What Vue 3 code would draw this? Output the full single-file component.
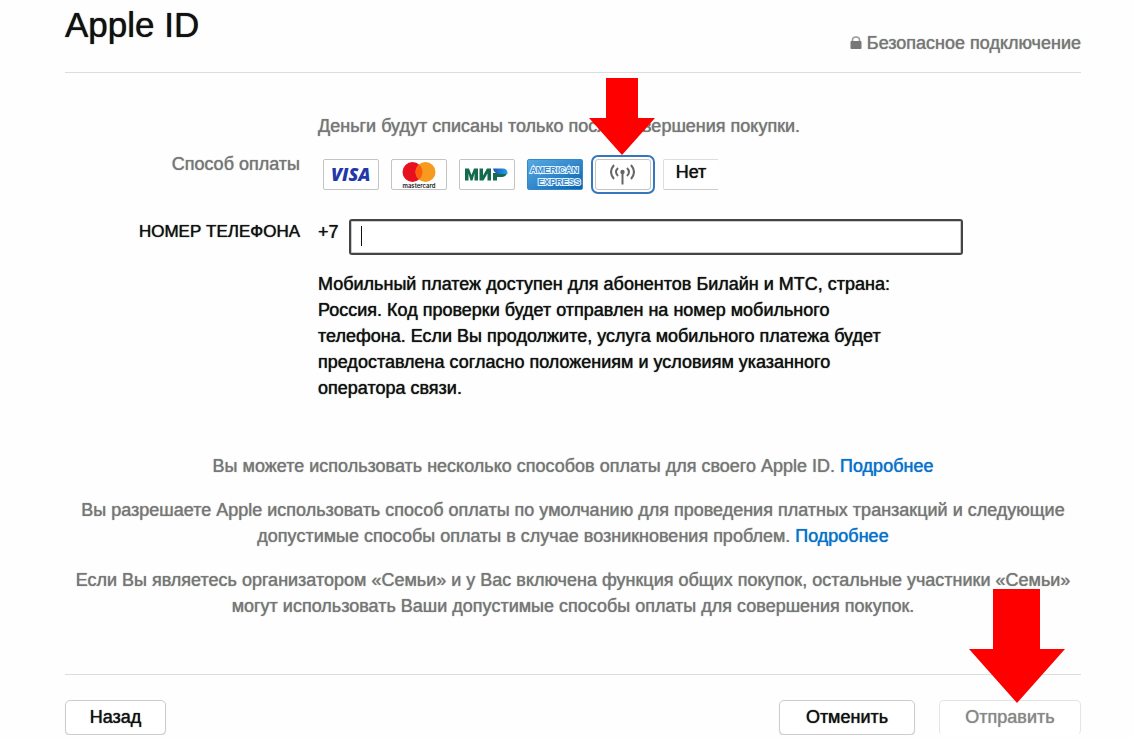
<script setup>
import { ref, onMounted } from 'vue'

const method = ref('mobile')
const phone = ref('')
const phoneInput = ref(null)

onMounted(() => phoneInput.value.focus())
</script>

<template>
  <main class="page">
    <header class="header">
      <h1 class="title">Apple ID</h1>
      <p class="secure">
        <svg class="lock" viewBox="0 0 12 14" aria-hidden="true">
          <path d="M2.500 7V4a3.500 3 0 0 1 7 0v3" fill="none" stroke="#999" stroke-width="1.600" />
          <rect x="0.500" y="5" width="11" height="8" rx="1" fill="#777" />
        </svg>
        Безопасное подключение
      </p>
    </header>

    <form class="form" @submit.prevent>
      <p class="note second">Деньги будут списаны только после совершения покупки.</p>

      <span id="method-label" class="label muted">Способ оплаты</span>
      <div class="methods" role="radiogroup" aria-labelledby="method-label">
        <label class="card">
          <input v-model="method" type="radio" name="method" value="visa" aria-label="Visa" />
          <svg class="art" viewBox="0 0 54 29" aria-hidden="true">
            <text x="7" y="21" font-family="Open Sans, sans-serif" font-size="18" font-weight="800" font-style="italic" fill="#2338a8">VISA</text>
          </svg>
        </label>
        <label class="card">
          <input v-model="method" type="radio" name="method" value="mastercard" aria-label="Mastercard" />
          <svg class="art" viewBox="0 0 54 29" aria-hidden="true">
            <circle cx="20.500" cy="12" r="10" fill="#e8101f" />
            <circle cx="33.500" cy="12" r="10" fill="#f79a20" />
            <path d="M27 4.400a10 10 0 0 1 0 15.200a10 10 0 0 1 0-15.200z" fill="#ff5f0b" />
            <text x="27" y="28" text-anchor="middle" font-family="Inter, sans-serif" font-size="6" font-weight="600" fill="#222">mastercard</text>
          </svg>
        </label>
        <label class="card">
          <input v-model="method" type="radio" name="method" value="mir" aria-label="Мир" />
          <svg class="art" viewBox="0 0 54 29" aria-hidden="true">
            <defs>
              <linearGradient id="mir-blue"><stop offset="0" stop-color="#1c52b8" /><stop offset="1" stop-color="#20a0e8" /></linearGradient>
            </defs>
            <path d="M5 20.500V8.500h4l2.500 6.500 2.500-6.500h4v12h-3.500v-7l-2 7h-2l-2-7v7z" fill="#126b4d" />
            <path d="M19.500 20.500v-12H23v7l4-7h4v12h-3.500v-7l-4 7z" fill="#126b4d" />
            <path d="M33 13h14q-1 4-5.500 4H37v3.500h-4z" fill="#126b4d" />
            <path d="M33 8.500h9.500q5.500 0 5 5.500h-9q-4.500-1-5.500-5.500z" fill="url(#mir-blue)" />
          </svg>
        </label>
        <label class="card amex">
          <input v-model="method" type="radio" name="method" value="amex" aria-label="American Express" />
          <svg class="art" viewBox="0 0 54 29" aria-hidden="true">
            <defs>
              <linearGradient id="amex-blue" x2="1" y2="1"><stop offset="0" stop-color="#56a9df" /><stop offset="0.500" stop-color="#3489cc" /><stop offset="1" stop-color="#0b62ab" /></linearGradient>
            </defs>
            <rect width="54" height="29" fill="url(#amex-blue)" />
            <g font-family="Liberation Sans, sans-serif" font-size="9" font-weight="700" fill="#3489cc" stroke="#e4f3ff" stroke-width="2" paint-order="stroke">
              <text x="2" y="13">AMERICAN</text>
              <text x="10" y="25">EXPRESS</text>
            </g>
          </svg>
        </label>
        <label class="card">
          <input v-model="method" type="radio" name="method" value="mobile" aria-label="Мобильный платеж" />
          <svg class="art" viewBox="0 0 54 29" aria-hidden="true" fill="none" stroke="#666" stroke-width="2">
            <path d="M18 5q-6 7 0 14M35 5q6 7 0 14M22 8q-4 4 0 8M31 8q4 4 0 8M26.500 12v12.500" />
            <circle cx="26.500" cy="12" r="2.200" fill="#666" stroke="none" />
          </svg>
          <svg class="arrow arrow-method" viewBox="0 0 66 77" aria-hidden="true">
            <path d="M17 0h32v40h17L33 77 0 40h17z" fill="#f00" />
          </svg>
        </label>
        <label class="card none">
          <input v-model="method" type="radio" name="method" value="none" />
          <span>Нет</span>
        </label>
      </div>

      <label class="label phone-label" for="phone">НОМЕР ТЕЛЕФОНА</label>
      <div class="phone-row">
        <span>+7</span>
        <input id="phone" ref="phoneInput" v-model="phone" class="phone" :class="{ empty: !phone }" type="tel" />
      </div>

      <p class="help second">
        Мобильный платеж доступен для абонентов Билайн и МТС, страна:<br />
        Россия. Код проверки будет отправлен на номер мобильного<br />
        телефона. Если Вы продолжите, услуга мобильного платежа будет<br />
        предоставлена согласно положениям и условиям указанного<br />
        оператора связи.
      </p>
    </form>

    <section class="terms">
      <p>Вы можете использовать несколько способов оплаты для своего Apple ID. <a href="#">Подробнее</a></p>
      <p>
        Вы разрешаете Apple использовать способ оплаты по умолчанию для проведения платных транзакций и следующие<br />
        допустимые способы оплаты в случае возникновения проблем. <a href="#">Подробнее</a>
      </p>
      <p>
        Если Вы являетесь организатором «Семьи» и у Вас включена функция общих покупок, остальные участники «Семьи»<br />
        могут использовать Ваши допустимые способы оплаты для совершения покупок.
      </p>
    </section>

    <footer class="footer">
      <button class="btn back" type="button">Назад</button>
      <button class="btn cancel" type="button">Отменить</button>
      <div class="submit-wrap">
        <button class="btn submit" type="button" disabled>Отправить</button>
        <svg class="arrow arrow-submit" viewBox="0 0 96 114" aria-hidden="true">
          <path d="M24 0h47v60h25L48 114 0 60h24z" fill="#f00" />
        </svg>
      </div>
    </footer>
  </main>
</template>

<style>
body {
  background: #fefefe;
}
</style>

<style scoped>
.page {
  box-sizing: border-box;
  padding: 0 53px 0 65px;
  font-family: "Liberation Sans", Arial, sans-serif;
  font-size: 18px;
  line-height: 26px;
  color: #111;
  text-shadow: 0 0 1px currentColor;
}

h1,
p {
  margin: 0;
}

.header {
  display: flex;
  justify-content: space-between;
  height: 72px;
  border-bottom: 1px solid #ddd;
}

.title {
  font-size: 35px;
  line-height: 50px;
  font-weight: 400;
}

.secure {
  display: flex;
  align-items: center;
  gap: 5px;
  padding-top: 14px;
  color: #777;
}

.lock {
  width: 12px;
  height: 14px;
}

.form {
  display: grid;
  grid-template-columns: 235px 1fr;
  column-gap: 18px;
  padding-top: 40px;
}

.second {
  grid-column: 2;
}

.note,
.muted {
  color: #777;
}

.label {
  text-align: right;
}

.muted {
  padding-top: 12px;
}

.methods {
  display: flex;
  gap: 12px;
  padding: 20px 0 0 5px;
}

.card {
  position: relative;
  box-sizing: border-box;
  width: 56px;
  height: 31px;
  border: 1px solid #c4c4c4;
  border-radius: 2px;
  background: #fff;
}

.card input {
  position: absolute;
  inset: 0;
  margin: 0;
  opacity: 0;
}

.card:has(input:checked) {
  border-radius: 3px;
  outline: 2px solid #3477bd;
  outline-offset: 2px;
}

.art {
  display: block;
  width: 54px;
  height: 29px;
  text-shadow: none;
}

.amex {
  border-color: #3489cc;
}

.none {
  border-color: #ddd transparent #ccc #ddd;
  line-height: 24px;
  text-align: center;
}

.arrow {
  position: absolute;
  pointer-events: none;
}

.arrow-method {
  left: -7px;
  bottom: 34px;
  width: 66px;
  height: 77px;
}

.phone-label {
  padding-top: 29px;
  font-size: 17px;
}

.phone-row {
  display: flex;
  gap: 10px;
  padding-top: 29px;
}

.phone {
  box-sizing: border-box;
  flex: 0 1 614px;
  min-width: 0;
  height: 36px;
  padding: 0 10px;
  border: 2px solid #444;
  border-radius: 3px;
  outline: none;
  background: #fff;
  box-shadow: inset 0 0 0 1px #ccc;
  font: inherit;
  color: #111;
}

.phone.empty {
  background: linear-gradient(#111, #111) 10px 5px / 1px 20px no-repeat #fff;
  caret-color: transparent;
}

.help {
  padding-top: 16px;
}

.terms {
  display: grid;
  gap: 18px;
  padding-top: 52px;
  text-align: center;
  white-space: nowrap;
  color: #777;
}

.terms a {
  color: #0b70c8;
  text-decoration: none;
}

.footer {
  display: flex;
  gap: 24px;
  margin-top: 55px;
  padding-top: 25px;
  border-top: 1px solid #ddd;
}

.btn {
  box-sizing: border-box;
  height: 35px;
  padding: 0 0 2px;
  border: 1px solid #ccc;
  border-radius: 5px;
  background: #fff;
  box-shadow: 0 1px 1px #ddd;
  font: inherit;
  text-shadow: inherit;
  color: #111;
}

.back {
  width: 101px;
  margin-right: auto;
}

.cancel {
  width: 136px;
}

.submit-wrap {
  position: relative;
}

.submit {
  width: 142px;
  border-color: #e4e4e4;
  border-bottom-color: transparent;
  box-shadow: none;
  color: #888;
}

.arrow-submit {
  left: 30px;
  bottom: 32px;
  width: 96px;
  height: 114px;
}
</style>
